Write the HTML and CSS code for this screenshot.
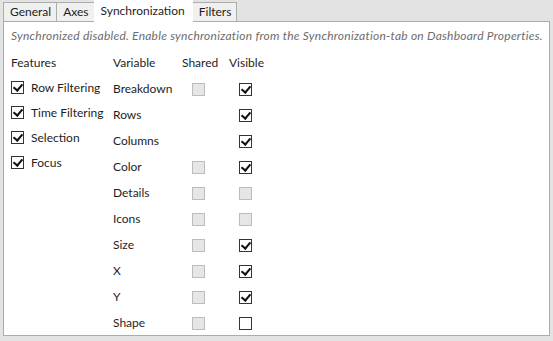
FILE: index.html
```html
<!DOCTYPE html>
<html lang="en">
<head>
    <meta charset="UTF-8">
    <title>Synchronization</title>
    <link rel="stylesheet" href="styles.css">
</head>
<body>
    <div class="tabs">
        <div class="tab">General</div>
        <div class="tab">Axes</div>
        <div class="tab active">Synchronization</div>
        <div class="tab">Filters</div>
    </div>
    <div class="panel">
        <p class="note">Synchronized disabled. Enable synchronization from the Synchronization-tab on Dashboard Properties.</p>
        <div class="cols">
            <div class="features">
                <div class="head">Features</div>
                <div class="frow"><span class="cb on"></span>Row Filtering</div>
                <div class="frow"><span class="cb on"></span>Time Filtering</div>
                <div class="frow"><span class="cb on"></span>Selection</div>
                <div class="frow"><span class="cb on"></span>Focus</div>
            </div>
            <div class="vars">
                <div class="head">Variable</div><div class="head">Shared</div><div class="head">Visible</div>

                <div class="name">Breakdown</div><div class="c"><span class="cb off"></span></div><div class="c"><span class="cb on"></span></div>
                <div class="name">Rows</div><div class="c"></div><div class="c"><span class="cb on"></span></div>
                <div class="name">Columns</div><div class="c"></div><div class="c"><span class="cb on"></span></div>
                <div class="name">Color</div><div class="c"><span class="cb off"></span></div><div class="c"><span class="cb on"></span></div>
                <div class="name">Details</div><div class="c"><span class="cb off"></span></div><div class="c"><span class="cb off"></span></div>
                <div class="name">Icons</div><div class="c"><span class="cb off"></span></div><div class="c"><span class="cb off"></span></div>
                <div class="name">Size</div><div class="c"><span class="cb off"></span></div><div class="c"><span class="cb on"></span></div>
                <div class="name">X</div><div class="c"><span class="cb off"></span></div><div class="c"><span class="cb on"></span></div>
                <div class="name">Y</div><div class="c"><span class="cb off"></span></div><div class="c"><span class="cb on"></span></div>
                <div class="name">Shape</div><div class="c"><span class="cb off"></span></div><div class="c"><span class="cb"></span></div>
            </div>
        </div>
    </div>
</body>
</html>
```

FILE: styles.css
```css
*{
    margin:0;
    padding:0;
    box-sizing:border-box;
}
body{
    background:#e3e3e3;
    font-family:Lato,"Liberation Sans",sans-serif;
    font-size:12px;
    color:#1e1e1e;
    height:341px;
}
.tabs{
    display:flex;
    align-items:flex-end;
    height:21px;
    padding-left:3px;
}
.tab{
    height:19px;
    line-height:18px;
    padding:0 5px 0 6px;
    background:#f0f0f0;
    border:1px solid #acacac;
    border-bottom:none;
    margin-right:-1px;
}
.tab.active{
    position:relative;
    height:22px;
    margin-bottom:-1px;
    padding:0 7px 0 6px;
    line-height:20px;
    background:#fff;
    border-color:#fff;
    z-index:1;
}
.panel{
    margin:0 3px 0 3px;
    height:315px;
    background:#fff;
    border:1px solid #acacac;
    padding:6px 7px;
}
.note{
    font-style:italic;
    color:#6d6d6d;
    line-height:16px;
    letter-spacing:0.24px;
    white-space:nowrap;
}
.cols{
    display:flex;
    margin-top:10px;
}
.head{
    height:18px;
    line-height:18px;
}
.features{
    width:102px;
}
.frow{
    display:flex;
    align-items:center;
    height:25px;
    padding-top:5px;
}
.frow .cb{
    margin-right:7px;
}
.vars{
    display:grid;
    grid-template-columns:69px 47px 40px;
    grid-auto-rows:26px;
    grid-template-rows:18px;
    align-items:end;
}
.vars .name, .vars .c{
    height:18px;
    line-height:18px;
}
.c{
    display:flex;
    align-items:center;
}
.c .cb{
    margin-left:10px;
}
.cb{
    display:inline-block;
    flex:none;
    width:13px;
    height:13px;
    border:1px solid #333;
    background:#fff;
    position:relative;
}
.cb.on::after{
    content:"";
    position:absolute;
    left:3px;
    top:0px;
    width:4px;
    height:7px;
    border:solid #111;
    border-width:0 2px 2px 0;
    transform:rotate(40deg);
}
.cb.off{
    border-color:#bcbcbc;
    background:#e6e6e6;
}
```
